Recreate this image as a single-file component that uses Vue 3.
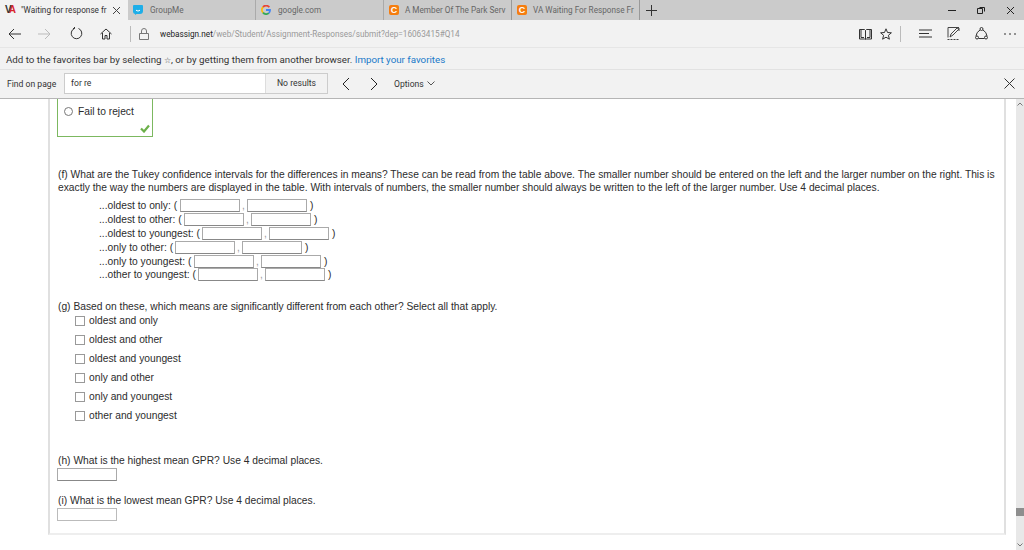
<script setup>
const tabs = [
  { label: 'GroupMe', icon: 'gm' },
  { label: 'google.com', icon: 'g' },
  { label: 'A Member Of The Park Serv', icon: 'c' },
  { label: 'VA Waiting For Response Fr', icon: 'c' }
]
const intervals = [
  { label: '...oldest to only: (', w: 81 },
  { label: '...oldest to other: (', w: 85 },
  { label: '...oldest to youngest: (', w: 103 },
  { label: '...only to other: (', w: 76 },
  { label: '...only to youngest: (', w: 95 },
  { label: '...other to youngest: (', w: 99 }
]
const checks = ['oldest and only', 'oldest and other', 'oldest and youngest', 'only and other', 'only and youngest', 'other and youngest']
</script>

<template>
  <div class="window">
    <div class="tabbar">
      <div class="tab active">
        <span class="wa"><i>V</i><b>A</b></span>
        <span class="tab-title">"Waiting for response fr</span>
        <svg class="tab-x" width="9" height="9" viewBox="0 0 9 9"><path d="M1 1l7 7M8 1L1 8" stroke="#444" fill="none"/></svg>
      </div>
      <div v-for="t in tabs" :key="t.label" class="tab">
        <svg v-if="t.icon === 'gm'" class="fav" viewBox="0 0 10 10"><path d="M1 0h8a1 1 0 0 1 1 1v5a3 3 0 0 1-3 3H3.500L2 10V9A2.500 2.500 0 0 1 0 6.500V1a1 1 0 0 1 1-1z" fill="#1eaee8"/><path d="M3 5.200q2 1.800 4 0" stroke="#fff" fill="none"/></svg>
        <svg v-else-if="t.icon === 'g'" class="fav" viewBox="0 0 10 10" fill="none" stroke-width="1.800"><path d="M8.300 2.200A4 4 0 0 0 2 2.100" stroke="#e94335"/><path d="M2 2.100a4 4 0 0 0 0 5.500" stroke="#fbbc05"/><path d="M2 7.600a4 4 0 0 0 5.800.500" stroke="#34a853"/><path d="M7.800 8.100A4 4 0 0 0 9 5H5" stroke="#4285f4"/></svg>
        <span v-else class="fav-c">C</span>
        <span class="tab-title dim">{{ t.label }}</span>
      </div>
      <svg class="plus" width="11" height="11" viewBox="0 0 11 11"><path d="M5.500 0v11M0 5.500h11" stroke="#333" fill="none"/></svg>
      <div class="winctl">
        <svg width="8" height="8" viewBox="0 0 8 8"><path d="M0 4.500h8" stroke="#222" fill="none"/></svg>
        <svg width="8" height="8" viewBox="0 0 8 8"><path d="M2.500 1.500h5v4M.5 2.500h5v5h-5z" stroke="#222" fill="none"/></svg>
        <svg width="9" height="9" viewBox="0 0 9 9"><path d="M1 1l7 7M8 1L1 8" stroke="#222" fill="none"/></svg>
      </div>
    </div>

    <div class="addrbar">
      <svg style="margin-left:8px" width="13" height="12" viewBox="0 0 13 12"><path d="M13 6H1M6 1L1 6l5 5" stroke="#333" fill="none"/></svg>
      <svg style="margin-left:17px" width="13" height="12" viewBox="0 0 13 12"><path d="M0 6h12M7 1l5 5-5 5" stroke="#bbb" fill="none"/></svg>
      <svg style="margin-left:19px" width="13" height="13" viewBox="0 0 13 13"><path d="M4.500 1.500A5.300 5.300 0 1 0 8.500 1.500M4.500 1.500V0M4.500 1.500H3" stroke="#333" fill="none"/></svg>
      <svg style="margin-left:17px" width="12" height="12" viewBox="0 0 12 12"><path d="M.5 6L6 1l5.500 5M2.500 5v6h2.500V7.500h2V11h2.500V5" stroke="#333" fill="none"/></svg>
      <span class="sep"></span>
      <svg style="margin-left:8px" width="10" height="12" viewBox="0 0 10 12"><path d="M.5 5.500h9v6h-9zM2.500 5.500V3a2.500 2.500 0 0 1 5 0v2.500" stroke="#777" fill="none"/></svg>
      <span class="url"><span class="host">webassign.net</span>/web/Student/Assignment-Responses/submit?dep=16063415#Q14</span>
      <div class="addr-right">
        <svg width="13" height="12" viewBox="0 0 13 12"><path d="M.5 1.500h5l1 1 1-1h5v9.500h-5l-1 .500-1-.500h-5zM6.500 2.500v8.500M2 1v8.500h3M11 1v8.500H8" stroke="#333" fill="none"/></svg>
        <svg style="margin-left:8px" width="12" height="12" viewBox="0 0 12 12"><path d="M6 .8l1.500 3.700 3.900.300-3 2.500 1 3.900L6 9.200l-3.400 2 1-3.900-3-2.500 3.900-.300z" stroke="#333" fill="none"/></svg>
        <span class="sep right"></span>
        <svg style="margin-left:18px" width="13" height="9" viewBox="0 0 13 9"><path d="M0 1h13M0 4.500h10M0 8h13" stroke="#333" fill="none"/></svg>
        <svg style="margin-left:15px" width="13" height="13" viewBox="0 0 13 13"><path d="M.5 12.500h12" stroke="#444" stroke-dasharray="2 1" fill="none"/><path d="M1 .5v10M12 1v3M1 .5h11M3 10l1-3 6-6 2 1-6 6z" stroke="#444" fill="none"/></svg>
        <svg style="margin-left:15px" width="13" height="13" viewBox="0 0 13 13"><circle cx="6.500" cy="2" r="1.500" stroke="#333" fill="none"/><circle cx="2" cy="10.500" r="1.500" stroke="#333" fill="none"/><circle cx="11" cy="10.500" r="1.500" stroke="#333" fill="none"/><path d="M5 3Q1.500 5 1 9M8 3q3.500 2 4 6M3.500 11.500h6" stroke="#333" fill="none"/></svg>
        <svg style="margin-left:16px" width="12" height="2" viewBox="0 0 12 2"><path d="M0 1h2M5 1h2M10 1h2" stroke="#333" fill="none"/></svg>
      </div>
    </div>

    <div class="favbar">Add to the favorites bar by selecting <span class="mini-star">☆</span>, or by getting them from another browser. <span class="link">Import your favorites</span></div>

    <div class="findbar">
      <span class="find-label">Find on page</span>
      <div class="find-box">
        <span class="find-input">for re</span>
        <span class="find-result">No results</span>
      </div>
      <svg style="margin-left:14px" width="8" height="14" viewBox="0 0 8 14"><path d="M7 1L1 7l6 6" stroke="#222" fill="none"/></svg>
      <svg style="margin-left:20px" width="8" height="14" viewBox="0 0 8 14"><path d="M1 1l6 6-6 6" stroke="#222" fill="none"/></svg>
      <span class="options">Options</span>
      <svg style="margin-left:3px" width="8" height="5" viewBox="0 0 8 5"><path d="M.5.500L4 4 7.500.500" stroke="#555" fill="none"/></svg>
      <svg class="find-close" width="11" height="11" viewBox="0 0 11 11"><path d="M.5.500l10 10M10.500.500l-10 10" stroke="#333" fill="none"/></svg>
    </div>

    <div class="viewport">
      <div class="panel">
        <div class="answer">
          <span class="radio"></span><span>Fail to reject</span>
          <svg class="check" width="10" height="9" viewBox="0 0 10 9"><path d="M1 4.500l3 3L9 1.500" stroke="#6cb04a" stroke-width="2.200" fill="none"/></svg>
        </div>

        <p class="para f">(f) What are the Tukey confidence intervals for the differences in means? These can be read from the table above. The smaller number should be entered on the left and the larger number on the right. This is exactly the way the numbers are displayed in the table. With intervals of numbers, the smaller number should always be written to the left of the larger number. Use 4 decimal places.</p>
        <div class="intervals">
          <div v-for="r in intervals" :key="r.label" class="irow">
            <span class="ilabel" :style="{ width: r.w + 'px' }">{{ r.label }}</span>
            <span class="field"></span><span class="comma">,</span><span class="field"></span><span class="close">)</span>
          </div>
        </div>

        <p class="para g">(g) Based on these, which means are significantly different from each other? Select all that apply.</p>
        <div class="checks">
          <div v-for="c in checks" :key="c" class="crow"><span class="box"></span><span>{{ c }}</span></div>
        </div>

        <p class="para h">(h) What is the highest mean GPR? Use 4 decimal places.</p>
        <span class="field block"></span>
        <p class="para i">(i) What is the lowest mean GPR? Use 4 decimal places.</p>
        <span class="field block light"></span>
      </div>
      <div class="scrollbar">
        <svg width="6" height="4" viewBox="0 0 6 4"><path d="M.5 3.500L3 1l2.500 2.500" stroke="#777" fill="none"/></svg>
        <span class="thumb"></span>
        <svg class="down" width="6" height="4" viewBox="0 0 6 4"><path d="M.5.500L3 3 5.500.500" stroke="#777" fill="none"/></svg>
      </div>
    </div>
  </div>
</template>

<style scoped>
.window { width: 1024px; height: 550px; overflow: hidden; background: #fff; font-family: Roboto, "Noto Sans", sans-serif; color: #333; display: flex; flex-direction: column; }

.tabbar { height: 20px; background: #cbcbcb; display: flex; align-items: center; flex: none; }
.tab { width: 128px; height: 20px; box-sizing: border-box; display: flex; align-items: center; padding-left: 5px; border-right: 1px solid #999; font-size: 8.200px; white-space: nowrap; flex: none; }
.tab.active { background: #f2f2f2; border-right: 0; }
.tab:nth-child(2), .tab:nth-child(3) { border-right-color: #aaa; }
.wa { width: 11px; font: bold 10px/1 "Liberation Sans", sans-serif; letter-spacing: -3px; margin-right: 5px; flex: none; }
.wa i { font-style: normal; color: #333; }
.wa b { color: #d8232a; }
.tab-title { flex: 1; }
.dim { color: #666; }
.tab-x { margin-right: 7px; margin-left: 3px; }
.fav { width: 10px; height: 10px; margin-right: 7px; flex: none; }
.fav-c { width: 10px; height: 10px; border-radius: 2px; margin-right: 6px; background: #f57d0f; color: #fff; font: bold 9px/10px "Liberation Sans", sans-serif; text-align: center; flex: none; }
.plus { margin-left: 6px; }
.winctl { margin-left: auto; display: flex; align-items: center; gap: 21px; padding-right: 9px; }

.addrbar { height: 28px; background: #f2f2f2; border-bottom: 1px solid #e6e6e6; box-sizing: border-box; display: flex; align-items: center; flex: none; }
.sep { width: 1px; height: 16px; background: #bbb; margin-left: 18px; }
.url { margin-left: 11px; font-size: 8.200px; color: #999; white-space: nowrap; }
.host { color: #222; }
.addr-right { margin-left: auto; display: flex; align-items: center; padding-right: 8px; }
.sep.right { margin-left: 8px; }

.favbar { height: 22px; background: #f2f2f2; border-bottom: 1px solid #e2e2e2; box-sizing: border-box; padding-left: 6px; font-size: 9.750px; line-height: 23px; white-space: nowrap; flex: none; }
.mini-star { font-size: 8px; color: #444; }
.link { color: #1979c9; }

.findbar { height: 29px; background: #f2f2f2; border-bottom: 1px solid #b5b5b5; box-sizing: border-box; display: flex; align-items: center; padding: 0 0 1px 7px; flex: none; font-size: 8.600px; }
.find-label { width: 57px; }
.find-box { width: 264px; height: 21px; box-sizing: border-box; border: 1px solid #ccc; display: flex; }
.find-input { width: 201px; box-sizing: border-box; background: #fff; border-right: 1px solid #ddd; padding-left: 6px; line-height: 19px; }
.find-result { flex: 1; text-align: center; line-height: 19px; }
.options { margin-left: 16px; }
.find-close { margin-left: auto; margin-right: 9px; }

.viewport { flex: 1; display: flex; background: #fff; min-height: 0; }
.panel { width: 958px; height: 436px; margin-left: 48px; box-sizing: border-box; border: 2px solid #e0e0e0; border-width: 0 2px 2px 2px; border-bottom-color: #eee; padding-left: 7px; font: 10.250px/13px "Liberation Sans", Arial, sans-serif; color: #2c2c2c; flex: none; }
.answer { width: 96px; height: 38px; box-sizing: border-box; border: 1px solid #7cb860; border-top: 0; display: flex; align-items: flex-start; padding: 6px 0 0 6px; position: relative; }
.radio { width: 7px; height: 7px; border-radius: 50%; border: 1px solid #777; margin: 2px 5px 0 0; flex: none; }
.check { position: absolute; right: 2px; bottom: 3px; }
.para { margin: 0 0 0 1px; width: 945px; }
.f { margin-top: 31px; }
.intervals { margin: 5px 0 0 42px; }
.irow { height: 13.800px; display: flex; align-items: center; white-space: nowrap; }
.ilabel { flex: none; }
.field { width: 60px; height: 13px; box-sizing: border-box; border: 1px solid #aaa; border-bottom-color: #888; background: #fff; flex: none; }
.comma { width: 7px; text-align: center; color: #999; }
.close { margin-left: 3px; }
.g { margin-top: 18px; }
.checks { margin: -1.300px 0 0 18px; }
.crow { height: 19px; display: flex; align-items: center; }
.box { width: 8px; height: 8px; border: 1px solid #999; margin-right: 4px; flex: none; }
.h { margin-top: 28.500px; }
.field.block { display: block; margin-top: 1px; }
.field.light { border-color: #bbb; }
.i { margin-top: 13px; }

.scrollbar { width: 8px; height: 451px; margin-left: 10px; background: #e8e8e8; display: flex; flex-direction: column; align-items: center; padding-top: 3px; box-sizing: border-box; position: relative; flex: none; }
.thumb { position: absolute; top: 409px; left: 0; width: 8px; height: 8px; background: #8e8e8e; }
.down { position: absolute; bottom: 3px; left: 1px; }
</style>
